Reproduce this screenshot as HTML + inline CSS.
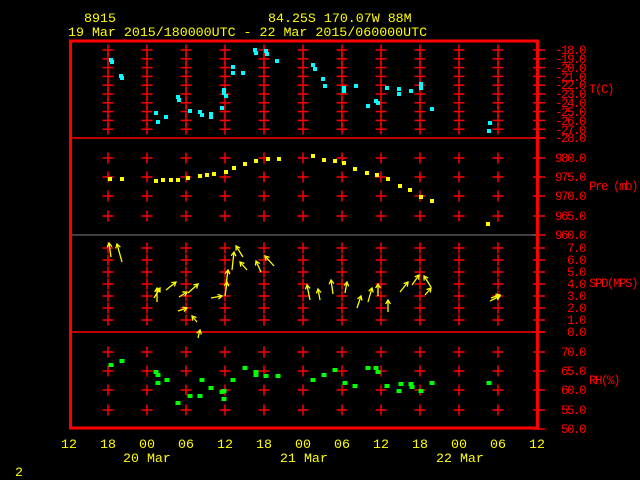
<!DOCTYPE html>
<html><head><meta charset="utf-8"><style>
html,body{margin:0;padding:0;background:#000;width:640px;height:480px;overflow:hidden}
svg{display:block}
.y{fill:#ffff00;font-family:"Liberation Mono",monospace;font-size:13.3px}
.r{fill:#ff0000;font-family:"Liberation Mono",monospace;font-size:12.5px;letter-spacing:-1.5px}
</style></head><body>
<svg id="s" width="640" height="480" xmlns="http://www.w3.org/2000/svg">
<g id="grid" stroke="#ff0000" stroke-width="1.5"></g>
<line x1="71" y1="235" x2="538" y2="235" stroke="#808080" stroke-width="1"/>
<line x1="71" y1="138" x2="545" y2="138" stroke="#ff0000" stroke-width="1.5"/>
<line x1="71" y1="332" x2="545" y2="332" stroke="#ff0000" stroke-width="1.5"/>
<rect x="70.5" y="41" width="467" height="387" fill="none" stroke="#ff0000" stroke-width="3"/>
<g id="pts"></g>
<g id="wind" stroke="#ffff00" stroke-width="1.3" fill="none"></g>
<text class="y" x="84" y="22">8915</text>
<text class="y" x="268" y="22">84.25S  170.07W   88M</text>
<text class="y" x="68" y="36">19 Mar 2015/180000UTC - 22 Mar 2015/060000UTC</text>
<g class="r" text-anchor="end">
<text x="585" y="54">-18.0</text><text x="585" y="63">-19.0</text><text x="585" y="72">-20.0</text><text x="585" y="81">-21.0</text><text x="585" y="89">-22.0</text><text x="585" y="98">-23.0</text><text x="585" y="107">-24.0</text><text x="585" y="116">-25.0</text><text x="585" y="125">-26.0</text><text x="585" y="134">-27.0</text><text x="585" y="142">-28.0</text>
<text x="585" y="162">980.0</text><text x="585" y="181">975.0</text><text x="585" y="200">970.0</text><text x="585" y="220">965.0</text><text x="585" y="239">960.0</text>
<text x="585" y="252">7.0</text><text x="585" y="264">6.0</text><text x="585" y="276">5.0</text><text x="585" y="288">4.0</text><text x="585" y="300">3.0</text><text x="585" y="312">2.0</text><text x="585" y="324">1.0</text><text x="585" y="336">0.0</text>
<text x="585" y="356">70.0</text><text x="585" y="375">65.0</text><text x="585" y="394">60.0</text><text x="585" y="414">55.0</text><text x="585" y="433">50.0</text>
</g>
<g class="r">
<text x="589" y="93">T(C)</text><text x="589" y="190">Pre (mb)</text><text x="589" y="287">SPD(MPS)</text><text x="589" y="384">RH(%)</text>
</g>
<g class="y" text-anchor="middle">
<text x="69" y="448">12</text><text x="108" y="448">18</text><text x="147" y="448">00</text><text x="186" y="448">06</text><text x="225" y="448">12</text><text x="264" y="448">18</text><text x="303" y="448">00</text><text x="342" y="448">06</text><text x="381" y="448">12</text><text x="420" y="448">18</text><text x="459" y="448">00</text><text x="498" y="448">06</text><text x="537" y="448">12</text>
</g>
<text class="y" x="123" y="462">20 Mar</text>
<text class="y" x="280" y="462">21 Mar</text>
<text class="y" x="436" y="462">22 Mar</text>
<text class="y" x="15" y="476">2</text>
</svg>
<script>
var NS="http://www.w3.org/2000/svg";
function el(p,t,a){var e=document.createElementNS(NS,t);for(var k in a)e.setAttribute(k,a[k]);p.appendChild(e);return e;}
var g=document.getElementById("grid");
var ys=[];
for(var i=0;i<10;i++)ys.push(50+i*8.8);
[158,177,196,216].forEach(function(v){ys.push(v)});
for(var i=0;i<7;i++)ys.push(248+i*12);
[352,371,390,410].forEach(function(v){ys.push(v)});
var xs=[108,147,186,225,264,303,342,381,420,459,498];
xs.forEach(function(x){ys.forEach(function(y){
 el(g,"line",{x1:x,y1:y-5.5,x2:x,y2:y+5.5});
 el(g,"line",{x1:x-5.5,y1:y,x2:x+5.5,y2:y});
});});
var ry=[];for(var i=0;i<=10;i++)ry.push(50+i*8.8);
[158,177,196,216,235].forEach(function(v){ry.push(v)});
for(var i=0;i<8;i++)ry.push(248+i*12);
[352,371,390,410,429].forEach(function(v){ry.push(v)});
ry.forEach(function(y){el(g,"line",{x1:533,y1:y,x2:545,y2:y});});
var p=document.getElementById("pts");
var cy=[[111,60],[112,62],[121,76],[122,78],[156,113],[158,122],[166,117],[178,97],[179,100],[190,111],[200,112],[202,115],[211,114],[211,117],[222,108],[224,90],[224,93],[226,96],[233,67],[233,73],[243,73],[255,50],[256,53],[266,51],[267,54],[277,61],[313,65],[315,69],[323,79],[325,86],[344,88],[344,91],[356,86],[368,106],[376,101],[378,103],[387,88],[399,89],[399,94],[411,91],[421,84],[421,88],[432,109],[490,123],[489,131]];
cy.forEach(function(q){el(p,"rect",{x:q[0]-2,y:q[1]-2,width:4,height:4,fill:"#00ffff"})});
var ye=[[110,179],[122,179],[156,181],[163,180],[171,180],[178,180],[188,178],[200,176],[207,175],[214,174],[226,172],[234,168],[245,164],[256,161],[268,159],[279,159],[313,156],[324,160],[335,161],[344,163],[355,169],[367,173],[377,175],[388,179],[400,186],[410,190],[421,197],[432,201],[488,224]];
ye.forEach(function(q){el(p,"rect",{x:q[0]-2,y:q[1]-2,width:4,height:4,fill:"#ffff00"})});
var gr=[[111,365],[122,361],[156,372],[158,375],[158,383],[167,380],[178,403],[190,396],[200,396],[202,380],[211,388],[222,392],[224,391],[224,399],[233,380],[245,368],[256,372],[256,375],[266,376],[278,376],[313,380],[324,375],[335,370],[345,383],[355,386],[368,368],[376,368],[378,372],[387,386],[399,391],[401,384],[411,384],[412,387],[421,391],[432,383],[489,383]];
gr.forEach(function(q){el(p,"rect",{x:q[0]-2.5,y:q[1]-2,width:5,height:4,fill:"#00ff00"})});
var w=document.getElementById("wind");
var ar=[[111,257,109,243],[122,262,117,244],[157,302,157,288],[154,298,160,288],[166,290,176,282],[179,297,187,292],[178,311,187,308],[188,293,198,284],[197,322,192,316],[198,338,200,330],[211,298,222,296],[225,296,227,282],[226,285,228,270],[232,270,234,252],[243,257,236,246],[247,270,240,262],[261,272,256,261],[274,266,265,256],[310,300,307,285],[320,300,318,289],[333,294,331,280],[345,293,347,282],[357,308,361,296],[368,302,372,288],[378,296,378,284],[388,312,388,300],[400,292,408,282],[412,285,419,275],[431,287,424,276],[425,295,431,288],[490,301,500,296],[491,298,500,295]];
ar.forEach(function(a){
 el(w,"line",{x1:a[0],y1:a[1],x2:a[2],y2:a[3]});
 var dx=a[2]-a[0],dy=a[3]-a[1],L=Math.sqrt(dx*dx+dy*dy),ux=dx/L,uy=dy/L;
 var h=4;
 el(w,"path",{d:"M"+(a[2]-h*ux+h*0.6*uy)+" "+(a[3]-h*uy-h*0.6*ux)+"L"+a[2]+" "+a[3]+"L"+(a[2]-h*ux-h*0.6*uy)+" "+(a[3]-h*uy+h*0.6*ux)});
});
</script>
</body></html>
